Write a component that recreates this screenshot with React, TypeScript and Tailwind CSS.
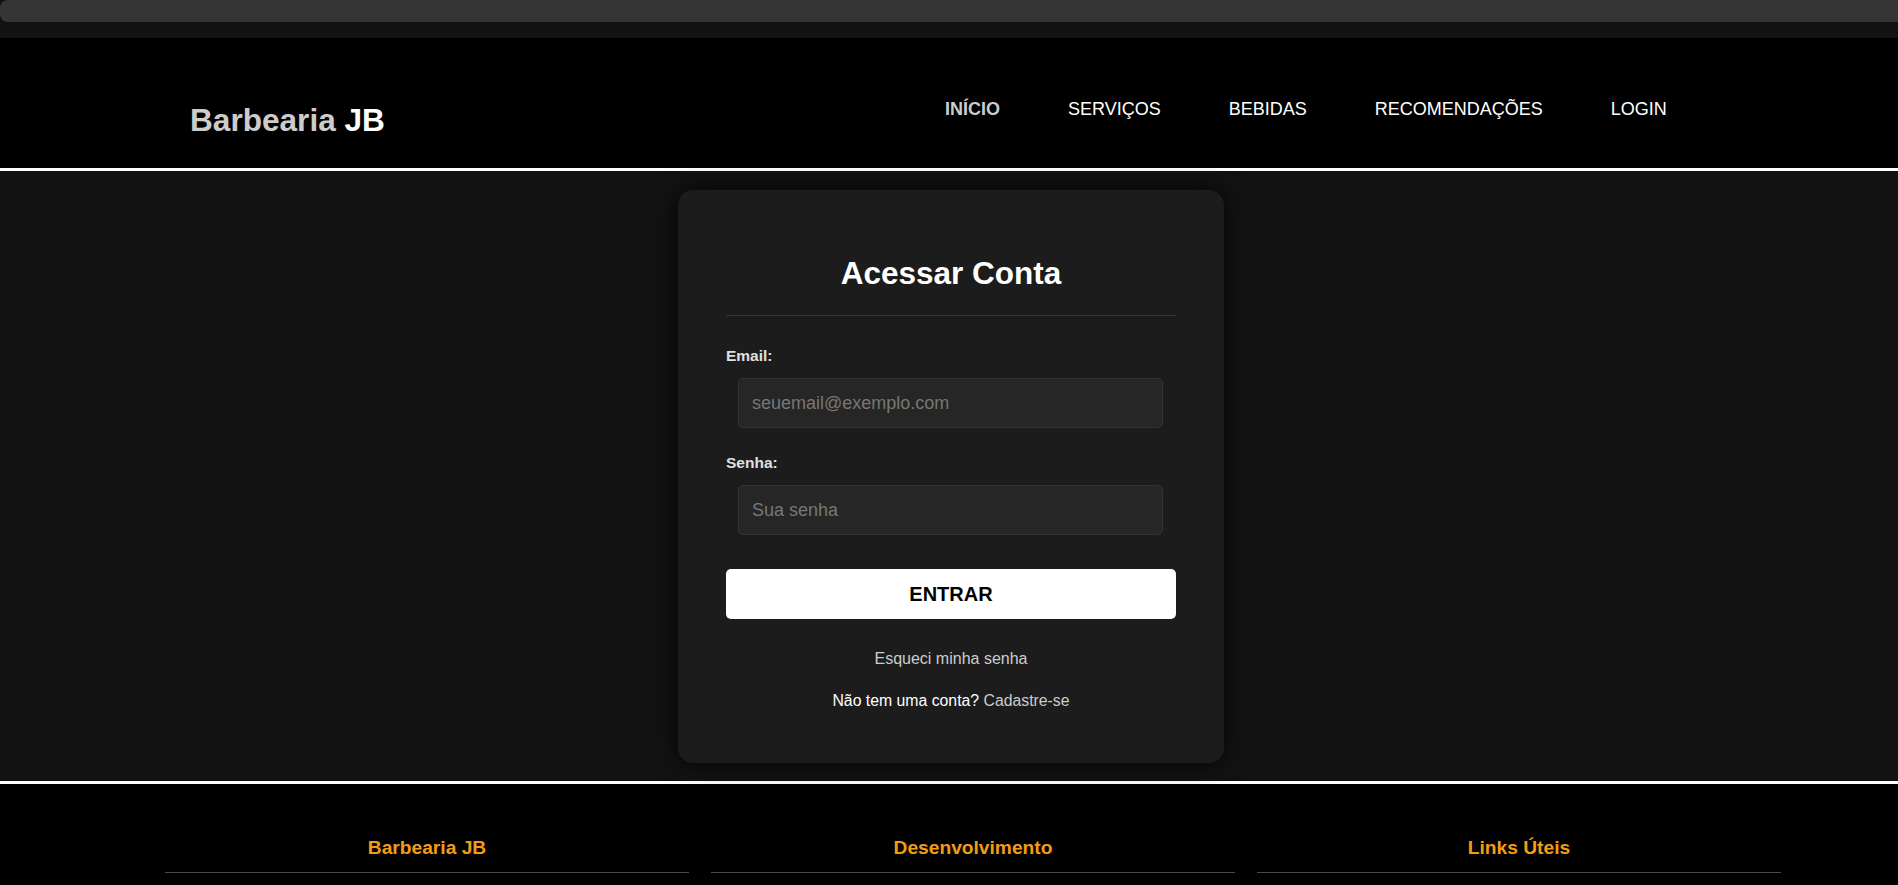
import React from "react";

export default function App() {
  const font = { fontFamily: '"Liberation Sans", Arial, Helvetica, sans-serif' };
  return (
    <div style={font} className="min-h-screen bg-black text-white">
      <div className="h-[38px] bg-[#121212]">
        <div className="h-[22px] bg-[#353535] rounded-l-[8px]" />
      </div>

      <header className="h-[133px] bg-black border-b-[3px] border-white flex items-start">
        <div className="pl-[190px] w-[945px] pt-[64px]">
          <h1 className="text-[31.6px] leading-[36px] font-bold text-[#cccccc] m-0">
            Barbearia <span className="text-white">JB</span>
          </h1>
        </div>
        <nav className="pt-[61px]">
          <ul className="flex gap-[68px] text-[18px] leading-[21px] list-none m-0 p-0">
            <li><a className="font-bold text-[#cccccc]">INÍCIO</a></li>
            <li><a className="text-white">SERVIÇOS</a></li>
            <li><a className="text-white">BEBIDAS</a></li>
            <li><a className="text-white">RECOMENDAÇÕES</a></li>
            <li><a className="text-white">LOGIN</a></li>
          </ul>
        </nav>
      </header>

      <main className="bg-[#121212] pt-[19px] pb-[18px] flex justify-center">
        <div className="ml-[4px] w-[546px] rounded-[15px] bg-[#1c1c1c] shadow-[0_0_25px_rgba(0,0,0,0.75)] px-[48px] pt-[65px] pb-[53px]">
          <h2 className="text-center text-[31.5px] leading-[36px] font-bold text-white pb-[24px] border-b border-[#333333] m-0">
            Acessar Conta
          </h2>

          <label className="block mt-[31px] text-[15.5px] leading-[18px] font-bold text-[#e0e0e0]">
            Email:
          </label>
          <input
            type="email"
            placeholder="seuemail@exemplo.com"
            className="block mt-[13px] ml-[12px] w-[425px] h-[50px] bg-[#262626] border border-[#333333] rounded-[5px] pl-[13px] text-[18px] text-white placeholder:text-[#777777] outline-none"
          />

          <label className="block mt-[26px] text-[15.5px] leading-[18px] font-bold text-[#e0e0e0]">
            Senha:
          </label>
          <input
            type="password"
            placeholder="Sua senha"
            className="block mt-[13px] ml-[12px] w-[425px] h-[50px] bg-[#262626] border border-[#333333] rounded-[5px] pl-[13px] text-[18px] text-white placeholder:text-[#777777] outline-none"
          />

          <button className="block mt-[34px] w-full h-[50px] bg-white rounded-[5px] text-black text-[20px] font-bold">
            ENTRAR
          </button>

          <p className="mt-[31px] text-center text-[16px] leading-[18px] text-[#cccccc]">
            Esqueci minha senha
          </p>
          <p className="mt-[24px] text-center text-[15.8px] leading-[18px] text-white">
            Não tem uma conta? <a className="text-[#cccccc]">Cadastre-se</a>
          </p>
        </div>
      </main>

      <footer className="bg-black border-t-[3px] border-white pt-[53px] pb-[120px]">
        <div className="flex pl-[165px] gap-[22px]">
          {["Barbearia JB", "Desenvolvimento", "Links Úteis"].map((t) => (
            <div key={t} className="w-[524px]">
              <h3 className="text-center text-[19.2px] leading-[22px] font-bold text-[#f39c12] pb-[13px] border-b border-[#4a4a4a] m-0">
                {t}
              </h3>
            </div>
          ))}
        </div>
      </footer>
    </div>
  );
}
